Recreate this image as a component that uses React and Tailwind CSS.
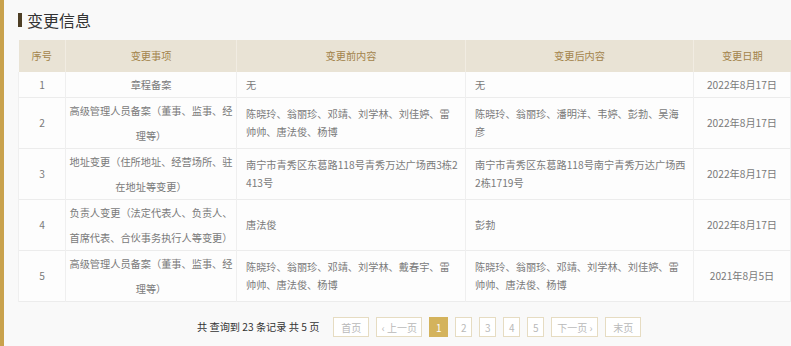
const rows = [
  {
    no: "1",
    item: ["章程备案"],
    before: ["无"],
    after: ["无"],
    date: "2022年8月17日",
  },
  {
    no: "2",
    item: ["高级管理人员备案（董事、监事、经", "理等）"],
    before: ["陈晓玲、翁丽珍、邓靖、刘学林、刘佳婷、雷", "帅帅、唐法俊、杨博"],
    after: ["陈晓玲、翁丽珍、潘明洋、韦婷、彭勃、吴海", "彦"],
    date: "2022年8月17日",
  },
  {
    no: "3",
    item: ["地址变更（住所地址、经营场所、驻", "在地址等变更）"],
    before: ["南宁市青秀区东葛路118号青秀万达广场西3栋2", "413号"],
    after: ["南宁市青秀区东葛路118号南宁青秀万达广场西", "2栋1719号"],
    date: "2022年8月17日",
  },
  {
    no: "4",
    item: ["负责人变更（法定代表人、负责人、", "首席代表、合伙事务执行人等变更）"],
    before: ["唐法俊"],
    after: ["彭勃"],
    date: "2022年8月17日",
  },
  {
    no: "5",
    item: ["高级管理人员备案（董事、监事、经", "理等）"],
    before: ["陈晓玲、翁丽珍、邓靖、刘学林、戴春宇、雷", "帅帅、唐法俊、杨博"],
    after: ["陈晓玲、翁丽珍、邓靖、刘学林、刘佳婷、雷", "帅帅、唐法俊、杨博"],
    date: "2021年8月5日",
  },
];

const Lines = ({ lines }) =>
  lines.map((l, i) => (
    <span key={i} className="block whitespace-nowrap">
      {l}
    </span>
  ));

const PageBtn = ({ children, active, w }) => (
  <span
    className={`flex h-[20px] items-center justify-center border text-[10px] ${w} ${
      active
        ? "border-[#d4b35c] bg-[#d4b35c] text-white"
        : "border-[#e6dcc2] bg-white text-[#b9b9b9]"
    }`}
  >
    {children}
  </span>
);

const App = () => {
  return (
    <div
      className="min-h-screen border-l-[4px] border-[#c9a24d] bg-[#f9f9f9] pl-[14px] pr-px pt-[10px]"
      style={{ fontFamily: '"Noto Sans CJK SC", "Noto Sans", sans-serif' }}
    >
      <h2 className="mb-[10px] flex h-[20px] items-center text-[16px] leading-[20px] text-[#333]">
        <span className="mr-[5px] h-[14px] w-[4px] bg-[#4e3f26]" />
        变更信息
      </h2>

      <table className="w-[772px] table-fixed border-collapse text-[10.2px] text-[#7a7a7a]">
        <colgroup>
          <col className="w-[47px]" />
          <col className="w-[171px]" />
          <col className="w-[229px]" />
          <col className="w-[228px]" />
          <col className="w-[97px]" />
        </colgroup>
        <thead>
          <tr className="h-[32px] bg-[#e9e3d5] text-[#a3844b]">
            <th className="border-r border-[#f1ece2] font-normal">序号</th>
            <th className="border-r border-[#f1ece2] font-normal">变更事项</th>
            <th className="border-r border-[#f1ece2] font-normal">变更前内容</th>
            <th className="border-r border-[#f1ece2] font-normal">变更后内容</th>
            <th className="font-normal">变更日期</th>
          </tr>
        </thead>
        <tbody>
          {rows.map((r) => (
            <tr key={r.no} className="border-b border-[#ececec] bg-[#fdfdfd]">
              <td className="border-x border-[#efefef] text-center align-middle">
                {r.no}
              </td>
              <td className="border-r border-[#efefef] px-[3px] text-center align-middle leading-[25px]">
                <Lines lines={r.item} />
              </td>
              <td className="border-r border-[#efefef] px-[9px] align-middle leading-[18px]">
                <Lines lines={r.before} />
              </td>
              <td className="border-r border-[#efefef] px-[9px] align-middle leading-[18px]">
                <Lines lines={r.after} />
              </td>
              <td className="border-r border-[#efefef] text-center align-middle">
                {r.date}
              </td>
            </tr>
          ))}
        </tbody>
      </table>

      <div className="mt-[15px] flex items-center pl-[179px] text-[10.2px] text-[#333]">
        <span className="mr-[14px] whitespace-pre">共 查询到 23 条记录 共 5 页</span>
        <div className="flex items-center gap-[7px]">
          <PageBtn w="w-[36px]">首页</PageBtn>
          <PageBtn w="w-[46px]">‹ 上一页</PageBtn>
          <PageBtn w="w-[19px]" active>
            1
          </PageBtn>
          <PageBtn w="w-[17px]">2</PageBtn>
          <PageBtn w="w-[17px]">3</PageBtn>
          <PageBtn w="w-[17px]">4</PageBtn>
          <PageBtn w="w-[17px]">5</PageBtn>
          <PageBtn w="w-[47px]">下一页 ›</PageBtn>
          <PageBtn w="w-[36px]">末页</PageBtn>
        </div>
      </div>
    </div>
  );
};

export default App;
